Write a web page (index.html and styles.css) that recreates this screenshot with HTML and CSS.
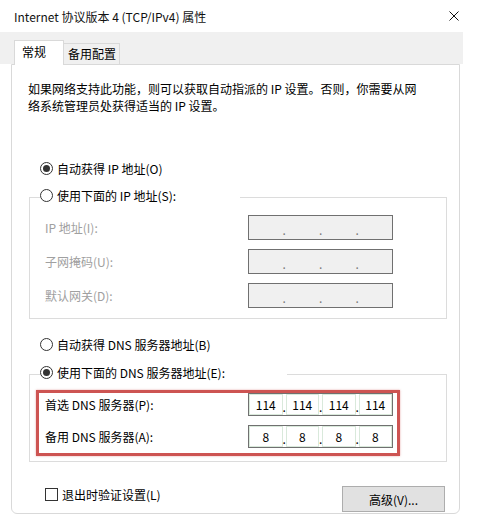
FILE: index.html
```html
<!DOCTYPE html>
<html lang="zh-CN">
<head>
<meta charset="utf-8">
<title>Internet 协议版本 4 (TCP/IPv4) 属性</title>
<link rel="stylesheet" href="styles.css">
</head>
<body>
<div class="dialog">
  <div class="titlebar">
    <span class="title">Internet 协议版本 4 (TCP/IPv4) 属性</span>
    <svg class="close" width="10" height="10" viewBox="0 0 10 10"><path d="M0.5 0.5L9.5 9.5M9.5 0.5L0.5 9.5" stroke="#111" stroke-width="1"/></svg>
  </div>
  <div class="tabstrip">
    <div class="tab active">常规</div>
    <div class="tab">备用配置</div>
  </div>
  <div class="panel">
    <p class="desc">如果网络支持此功能，则可以获取自动指派的 IP 设置。否则，你需要从网<br>络系统管理员处获得适当的 IP 设置。</p>

    <div class="radio-row r1"><span class="radio checked"></span><span>自动获得 IP 地址(O)</span></div>

    <fieldset class="group g1">
      <legend class="legend l1"><span class="radio"></span><span>使用下面的 IP 地址(S):</span></legend>
      <div class="field">
        <span class="lbl disabled">IP 地址(I):</span>
        <div class="ipbox off"><span class="cell"></span><span class="dot">.</span><span class="cell"></span><span class="dot">.</span><span class="cell"></span><span class="dot">.</span><span class="cell"></span></div>
      </div>
      <div class="field">
        <span class="lbl disabled">子网掩码(U):</span>
        <div class="ipbox off"><span class="cell"></span><span class="dot">.</span><span class="cell"></span><span class="dot">.</span><span class="cell"></span><span class="dot">.</span><span class="cell"></span></div>
      </div>
      <div class="field">
        <span class="lbl disabled">默认网关(D):</span>
        <div class="ipbox off"><span class="cell"></span><span class="dot">.</span><span class="cell"></span><span class="dot">.</span><span class="cell"></span><span class="dot">.</span><span class="cell"></span></div>
      </div>
    </fieldset>

    <div class="radio-row r3"><span class="radio"></span><span>自动获得 DNS 服务器地址(B)</span></div>

    <fieldset class="group g2">
      <legend class="legend l2"><span class="radio checked"></span><span>使用下面的 DNS 服务器地址(E):</span></legend>
      <div class="highlight">
        <div class="field dns">
          <span class="lbl">首选 DNS 服务器(P):</span>
          <div class="ipbox on"><span class="cell">114</span><span class="dot">.</span><span class="cell">114</span><span class="dot">.</span><span class="cell">114</span><span class="dot">.</span><span class="cell">114</span></div>
        </div>
        <div class="field dns">
          <span class="lbl">备用 DNS 服务器(A):</span>
          <div class="ipbox on"><span class="cell">8</span><span class="dot">.</span><span class="cell">8</span><span class="dot">.</span><span class="cell">8</span><span class="dot">.</span><span class="cell">8</span></div>
        </div>
      </div>
    </fieldset>

    <div class="footer">
      <div class="check-row"><span class="checkbox"></span><span>退出时验证设置(L)</span></div>
      <button class="btn" type="button">高级(V)...</button>
    </div>
  </div>
</div>
</body>
</html>
```

FILE: styles.css
```css
* { box-sizing: border-box; }
html, body { margin: 0; padding: 0; }
body {
  width: 485px;
  height: 525px;
  overflow: hidden;
  background: #fff;
  color: #000;
  font-family: "Segoe UI", "Noto Sans CJK SC", sans-serif;
  font-size: 12px;
  line-height: 17px;
}
.dialog { width: 485px; }

.titlebar {
  height: 32px;
  display: flex;
  align-items: center;
  justify-content: space-between;
  padding: 0 26px 0 14px;
}
.title { font-size: 12px; color: #111; }
.close { display: block; }

.tabstrip {
  width: 463px;
  height: 32px;
  background: #f0f0f0;
  display: flex;
  align-items: flex-end;
  padding-left: 14px;
}
.tab {
  height: 21px;
  width: 56px;
  padding: 1px 0 0 4px;
  background: #f0f0f0;
  border: 1px solid #d9d9d9;
  border-bottom: none;
  border-left: none;
}
.tab.active {
  position: relative;
  z-index: 1;
  width: 50px;
  height: 25px;
  margin-bottom: -1px;
  padding: 2px 0 0 7px;
  background: #fff;
  border-left: 1px solid #d9d9d9;
}

.panel {
  margin-left: 11px;
  width: 449px;
  height: 450px;
  border: 1px solid #d9d9d9;
  border-radius: 0 0 6px 6px;
  background: #fff;
}
.desc {
  margin: 15px 0 0 16px;
}

.radio-row, .legend, .check-row {
  display: flex;
  align-items: center;
  gap: 4px;
  height: 17px;
}
.r1 { margin: 46px 0 0 28px; }
.r3 { margin: 17px 0 0 28px; }

.radio {
  width: 13px;
  height: 13px;
  border: 1px solid #333;
  border-radius: 50%;
  background: #fff;
  display: flex;
  align-items: center;
  justify-content: center;
  flex: none;
}
.radio.checked::after {
  content: "";
  width: 7px;
  height: 7px;
  border-radius: 50%;
  background: #333;
}

.group {
  margin: 10px 0 0 17px;
  padding: 0;
  width: 418px;
  min-width: 0;
  border: 1px solid #dcdcdc;
}
.g1 { padding: 7px 0 10px 0; }
.g2 { margin-top: 11px; padding: 5px 0 5px 0; }
.legend {
  height: 21px;
  padding: 0 0 4px 0;
  margin-left: 10px;
  background: #fff;
}
.l1 { width: 200px; }
.l2 { width: 247px; }

.field {
  display: flex;
  align-items: center;
  justify-content: space-between;
  height: 25px;
  width: 348px;
  margin-left: 15px;
}
.field + .field { margin-top: 9px; }
.disabled { color: #a0a0a0; }

.ipbox {
  width: 145px;
  height: 25px;
  display: flex;
  align-items: center;
  border: 1px solid #707070;
}
.ipbox.off { background: #f0f0f0; color: #7a7a7a; }
.ipbox.on { background: #fff; }
.cell {
  flex: 1;
  align-self: stretch;
  display: flex;
  align-items: center;
  justify-content: center;
}
.dot {
  width: 3px;
  text-align: center;
  line-height: 12px;
  align-self: center;
  padding-top: 4px;
}
.ipbox.on .cell { box-shadow: inset 0 0 0 1px #d9e9db; }

.highlight {
  margin-left: 6px;
  width: 364px;
  height: 66px;
  border: 3px solid #cd5452;
  box-shadow: 0 0 2px rgba(205, 84, 82, 0.5);
  padding: 0 4px 0 6px;
}
.field.dns {
  height: 23px;
  width: auto;
  margin-left: 0;
}
.field.dns .ipbox { height: 23px; }

.footer {
  display: flex;
  justify-content: space-between;
  align-items: flex-start;
  margin: 24px 14px 0 33px;
}
.check-row { gap: 4px; }
.checkbox {
  width: 13px;
  height: 13px;
  border: 1px solid #333;
  background: #fff;
  flex: none;
}
.btn {
  width: 103px;
  height: 26px;
  padding: 0;
  background: #e1e1e1;
  border: 1px solid #adadad;
  border-radius: 0;
  font: inherit;
  color: #000;
}
```
